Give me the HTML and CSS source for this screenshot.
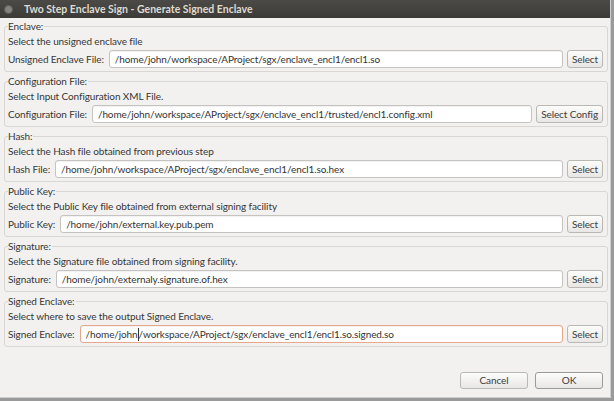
FILE: index.html
```html
<!DOCTYPE html>
<html>
<head>
<meta charset="utf-8">
<link rel="stylesheet" href="styles.css">
</head>
<body>
<div class="window">
  <div class="titlebar">
    <span class="close"></span>
    <span class="title">Two Step Enclave Sign - Generate Signed Enclave</span>
  </div>
  <div class="content">
    <fieldset class="group">
      <legend>Enclave:</legend>
      <div class="desc">Select the unsigned enclave file</div>
      <div class="row">
        <label class="lbl">Unsigned Enclave File:</label>
        <div class="input">/home/john/workspace/AProject/sgx/enclave_encl1/encl1.so</div>
        <button class="btn">Select</button>
      </div>
    </fieldset>
    <fieldset class="group">
      <legend>Configuration File:</legend>
      <div class="desc">Select Input Configuration XML File.</div>
      <div class="row">
        <label class="lbl">Configuration File:</label>
        <div class="input">/home/john/workspace/AProject/sgx/enclave_encl1/trusted/encl1.config.xml</div>
        <button class="btn">Select Config</button>
      </div>
    </fieldset>
    <fieldset class="group">
      <legend>Hash:</legend>
      <div class="desc">Select the Hash file obtained from previous step</div>
      <div class="row">
        <label class="lbl">Hash File:</label>
        <div class="input">/home/john/workspace/AProject/sgx/enclave_encl1/encl1.so.hex</div>
        <button class="btn">Select</button>
      </div>
    </fieldset>
    <fieldset class="group">
      <legend>Public Key:</legend>
      <div class="desc">Select the Public Key file obtained from external signing facility</div>
      <div class="row">
        <label class="lbl">Public Key:</label>
        <div class="input">/home/john/external.key.pub.pem</div>
        <button class="btn">Select</button>
      </div>
    </fieldset>
    <fieldset class="group">
      <legend>Signature:</legend>
      <div class="desc">Select the Signature file obtained from signing facility.</div>
      <div class="row">
        <label class="lbl">Signature:</label>
        <div class="input">/home/john/externaly.signature.of.hex</div>
        <button class="btn">Select</button>
      </div>
    </fieldset>
    <fieldset class="group">
      <legend>Signed Enclave:</legend>
      <div class="desc">Select where to save the output Signed Enclave.</div>
      <div class="row">
        <label class="lbl">Signed Enclave:</label>
        <div class="input focused">/home/john<span class="caret"></span>/workspace/AProject/sgx/enclave_encl1/encl1.so.signed.so</div>
        <button class="btn">Select</button>
      </div>
    </fieldset>
  </div>
  <div class="footer">
    <button class="btn wide">Cancel</button>
    <button class="btn wide ok">OK</button>
  </div>
</div>
</body>
</html>
```

FILE: styles.css
```css
* { box-sizing: border-box; }
html, body { margin: 0; padding: 0; }
body {
  width: 614px;
  height: 401px;
  overflow: hidden;
  background: #9a9a9a;
  font-family: "Lato", "Open Sans", "DejaVu Sans", sans-serif;
  font-size: 10px;
  letter-spacing: -0.1px;
  color: #363636;
}
.window {
  width: 611px;
  height: 398px;
  background: #f2f1f0;
  border-right: 1px solid #cfcfcf;
  border-bottom: 1px solid #cfcfcf;
  display: flex;
  flex-direction: column;
}
.titlebar {
  height: 18px;
  flex: none;
  background: linear-gradient(#4b4a46, #3c3b37);
  display: flex;
  align-items: center;
  padding-left: 4px;
}
.close {
  width: 9px;
  height: 9px;
  border-radius: 50%;
  background: #85837e;
  border: 1px solid #5e5d58;
}
.title {
  margin-left: 11px;
  color: #dfdbd2;
  font-weight: bold;
  font-size: 10.5px;
  letter-spacing: 0;
  white-space: nowrap;
}
.content {
  padding: 1px 2px 0 4px;
  display: flex;
  flex-direction: column;
  gap: 2px;
}
.group {
  margin: 0;
  min-width: 0;
  border: 1px solid #d9d7d3;
  border-radius: 3px;
  padding: 1px 4px 3px 3px;
}
.group legend {
  padding: 0 1px 0 0;
  line-height: 14px;
}
.desc {
  line-height: 14px;
  height: 14px;
  margin-bottom: 2px;
  white-space: nowrap;
}
.row {
  display: flex;
  align-items: center;
  gap: 4px;
  height: 18px;
}
.lbl {
  margin-right: 1px;
  white-space: nowrap;
}
.input {
  flex: 1;
  min-width: 0;
  height: 18px;
  background: #fff;
  border: 1px solid #c5c3bf;
  border-radius: 3px;
  padding-left: 5px;
  line-height: 16px;
  white-space: nowrap;
  overflow: hidden;
  color: #333;
  box-shadow: inset 0 1px 1px rgba(0, 0, 0, 0.06);
}
.input.focused {
  border-color: #e6a88c;
}
.caret {
  display: inline-block;
  width: 1px;
  height: 13px;
  background: #333;
  vertical-align: -3px;
}
.btn {
  height: 18px;
  padding: 0 4px;
  border: 1px solid #bab8b3;
  border-radius: 3px;
  background: linear-gradient(#fcfcfb, #e8e7e5);
  font: inherit;
  letter-spacing: inherit;
  color: #3c3c3c;
  line-height: 16px;
  white-space: nowrap;
  flex: none;
}
.footer {
  margin-top: auto;
  display: flex;
  justify-content: flex-end;
  gap: 7px;
  padding: 0 7px 8px 0;
}
.wide {
  width: 68px;
  height: 17px;
  line-height: 15px;
}
.ok {
  border-color: #9c9a95;
}
```
